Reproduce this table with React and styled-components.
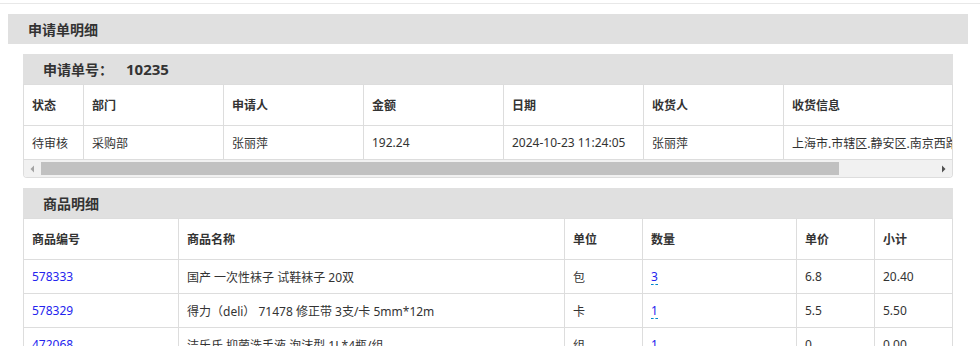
import React from "react";
import styled, { createGlobalStyle } from "styled-components";

const GlobalStyle = createGlobalStyle`
  html, body { margin: 0; padding: 0; background: #fff; }
  body {
    font-family: "Noto Sans", "Noto Sans CJK SC", sans-serif;
    font-size: 12px;
    color: #333;
  }
  * { box-sizing: border-box; }
`;

const Page = styled.div`
  margin-top: 3px;
  border-top: 1px solid #e8e8e8;
  padding: 10px 12px 0 8px;
  width: 980px;
  height: 343px;
  overflow: hidden;
`;

const Band = styled.div`
  height: 30px;
  background: #e0e0e0;
  display: flex;
  align-items: center;
  padding-left: 20px;
  font-size: 14px;
  font-weight: 700;
  color: #333;
`;

const Section = styled.div`
  margin: 10px 15px 0 15px;
`;

const OrderNo = styled.span`
  margin-left: 13px;
  font-size: 15px;
`;

const TableBox = styled.div`
  border: 1px solid #ddd;
  border-top: none;
  border-radius: 0 0 4px 4px;
  overflow: hidden;
  background: #fff;
`;

const TopEdge = styled.div`
  border-top: 1px solid #ddd;
  border-radius: 4px 4px 0 0;
  margin: 0 -1px;
  height: 0;
`;

const Grid = styled.div`
  width: max-content;
`;

const Row = styled.div`
  display: grid;
  grid-template-columns: ${(p) => p.$cols};
  height: ${(p) => (p.$head ? 41 : 34)}px;
  border-bottom: 1px solid #ddd;
`;

const Cell = styled.div`
  display: flex;
  align-items: center;
  padding: 0 8px;
  border-right: ${(p) => (p.$last ? "none" : "1px solid #ddd")};
  white-space: nowrap;
  overflow: hidden;
  font-weight: ${(p) => (p.$head ? 700 : 400)};
  color: #333;
`;

const Link = styled.a`
  color: #2424ee;
  text-decoration: none;
`;

const Editable = styled.a`
  color: #2424ee;
  text-decoration: none;
  border-bottom: 1px dashed #0088cc;
  line-height: 15px;
`;

const ScrollTrack = styled.div`
  display: flex;
  height: 17px;
  background: #f1f1f1;
`;

const ArrowBtn = styled.div`
  width: 17px;
  height: 17px;
  display: flex;
  align-items: center;
  justify-content: center;
  flex: none;
`;

const Thumb = styled.div`
  width: ${(p) => p.$w}px;
  height: 13px;
  margin-top: 2px;
  background: #c1c1c1;
  flex: none;
`;

const Spacer = styled.div`
  flex: 1;
`;

const Tri = ({ dir, color }) => (
  <svg width="7" height="8" viewBox="0 0 7 8">
    {dir === "left" ? (
      <polygon points="5,0.5 5,7.5 1.5,4" fill={color} />
    ) : (
      <polygon points="2,0.5 2,7.5 5.5,4" fill={color} />
    )}
  </svg>
);

const cols1 = "60px 140px 140px 140px 140px 140px 300px";
const cols2 = "155px 386px 78px 154px 78px 77px";

const head1 = ["状态", "部门", "申请人", "金额", "日期", "收货人", "收货信息"];
const row1 = [
  "待审核",
  "采购部",
  "张丽萍",
  "192.24",
  "2024-10-23 11:24:05",
  "张丽萍",
  "上海市.市辖区.静安区.南京西路1266号",
];

const head2 = ["商品编号", "商品名称", "单位", "数量", "单价", "小计"];
const goods = [
  ["578333", "国产 一次性袜子 试鞋袜子 20双", "包", "3", "6.8", "20.40"],
  ["578329", "得力（deli） 71478 修正带 3支/卡 5mm*12m", "卡", "1", "5.5", "5.50"],
  ["472068", "洁乐氏 抑菌洗手液 泡沫型 1L*4瓶/组", "组", "1", "0", "0.00"],
];

export default function App() {
  return (
    <>
      <GlobalStyle />
      <Page>
        <Band>申请单明细</Band>
        <Section>
          <Band>
            申请单号：<OrderNo>10235</OrderNo>
          </Band>
          <TableBox>
            <TopEdge />
            <Grid>
              <Row $cols={cols1} $head>
                {head1.map((h) => (
                  <Cell key={h} $head>
                    {h}
                  </Cell>
                ))}
              </Row>
              <Row $cols={cols1}>
                {row1.map((v, i) => (
                  <Cell key={i}>{v}</Cell>
                ))}
              </Row>
            </Grid>
            <ScrollTrack>
              <ArrowBtn>
                <Tri dir="left" color="#a3a3a3" />
              </ArrowBtn>
              <Thumb $w={798} />
              <Spacer />
              <ArrowBtn>
                <Tri dir="right" color="#505050" />
              </ArrowBtn>
            </ScrollTrack>
          </TableBox>
        </Section>
        <Section>
          <Band>商品明细</Band>
          <TableBox>
            <TopEdge />
            <Grid>
              <Row $cols={cols2} $head>
                {head2.map((h, i) => (
                  <Cell key={h} $head $last={i === head2.length - 1}>
                    {h}
                  </Cell>
                ))}
              </Row>
              {goods.map((g) => (
                <Row $cols={cols2} key={g[0]}>
                  <Cell>
                    <Link href="#">{g[0]}</Link>
                  </Cell>
                  <Cell>{g[1]}</Cell>
                  <Cell>{g[2]}</Cell>
                  <Cell>
                    <Editable href="#">{g[3]}</Editable>
                  </Cell>
                  <Cell>{g[4]}</Cell>
                  <Cell $last>{g[5]}</Cell>
                </Row>
              ))}
            </Grid>
          </TableBox>
        </Section>
      </Page>
    </>
  );
}
